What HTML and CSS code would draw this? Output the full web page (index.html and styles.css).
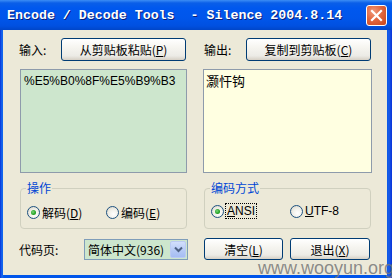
FILE: index.html
```html
<!DOCTYPE html>
<html lang="zh-CN">
<head>
    <meta charset="UTF-8">
    <title>Encode / Decode Tools - Silence 2004.8.14</title>
    <link rel="stylesheet" href="styles.css">
</head>
<body>
    <div class="window">
        <div class="titlebar">
            <span class="title">Encode / Decode Tools  - Silence 2004.8.14</span>
            <span class="close-btn">
                <svg width="13" height="13" viewBox="0 0 13 13">
                    <path d="M2 2 L11 11 M11 2 L2 11" stroke="#fff" stroke-width="2.2" stroke-linecap="square"/>
                </svg>
            </span>
        </div>

        <div class="client">
            <!-- left column -->
            <div class="col">
                <div class="row">
                    <span class="label">输入:</span>
                    <button class="btn btn-wide">从剪贴板粘贴(<u>P</u>)</button>
                </div>
                <div class="textbox textbox-in">%E5%B0%8F%E5%B9%B3</div>
                <fieldset class="group">
                    <legend>操作</legend>
                    <label class="radio checked"><span class="dot"></span><span>解码(<u>D</u>)</span></label>
                    <label class="radio"><span class="dot"></span><span>编码(<u>E</u>)</span></label>
                </fieldset>
                <div class="row row-bottom">
                    <span class="label label-page">代码页:</span>
                    <div class="select">
                        <span class="select-text">简体中文(936)</span>
                        <span class="select-arrow">
                            <svg width="9" height="7" viewBox="0 0 9 7">
                                <path d="M1 1.5 L4.5 5 L8 1.5" fill="none" stroke="#4D6185" stroke-width="2"/>
                            </svg>
                        </span>
                    </div>
                </div>
            </div>

            <!-- right column -->
            <div class="col">
                <div class="row">
                    <span class="label">输出:</span>
                    <button class="btn btn-wide">复制到剪贴板(<u>C</u>)</button>
                </div>
                <div class="textbox textbox-out">灏忓钩</div>
                <fieldset class="group group-right">
                    <legend>编码方式</legend>
                    <label class="radio checked"><span class="dot"></span><span class="focus"><u>A</u>NSI</span></label>
                    <label class="radio radio-utf"><span class="dot"></span><span><u>U</u>TF-8</span></label>
                </fieldset>
                <div class="row row-bottom">
                    <button class="btn btn-small">清空(<u>L</u>)</button>
                    <button class="btn btn-small btn-exit">退出(<u>X</u>)</button>
                </div>
            </div>
        </div>

        <div class="watermark">www.wooyun.org</div>
    </div>
</body>
</html>
```

FILE: styles.css
```css
/* Windows XP style dialog */
body {
    margin: 0;
    background: #0054e3;
    font-family: "Noto Sans CJK SC", "Liberation Sans", sans-serif;
    font-size: 12px;
    color: #000;
}

.window {
    position: relative;
    width: 392px;
    height: 278px;
    display: flex;
    flex-direction: column;
    overflow: hidden;
    background: linear-gradient(to right, #0831d9 0, #166aee 2px, #0055ea 4px, #0055ea 386px, #1a5ce6 389px, #0831d9 392px);
}

.titlebar {
    height: 30px;
    display: flex;
    align-items: center;
    justify-content: space-between;
    padding: 0 5px 0 7px;
    background: linear-gradient(#3c8df5 0, #0a5fe8 3px, #0058ee 8px, #0056eb 18px, #0050e0 26px, #0046c8 30px);
}

.title {
    font-family: "Liberation Mono", monospace;
    font-weight: bold;
    font-size: 13.3px;
    color: #fff;
    white-space: pre;
    text-shadow: 1px 1px 0 #0a1e78;
    padding-top: 1px;
}

.close-btn {
    width: 21px;
    height: 21px;
    box-sizing: border-box;
    border: 1px solid #fff;
    border-radius: 3px;
    background: radial-gradient(circle at 35% 30%, #f09a7c 0, #e2673f 45%, #c8441a 100%);
    display: flex;
    align-items: center;
    justify-content: center;
}

.client {
    flex: 1;
    margin: 0 5px 3px 3px;
    background: #ece9d8;
    padding: 8px 0 0 15px;
    display: grid;
    grid-template-columns: 170px 169px;
    column-gap: 15px;
}

.col {
    display: flex;
    flex-direction: column;
}

.row {
    display: flex;
    align-items: center;
    height: 23px;
}

.label {
    width: 42px;
    padding-left: 1px;
}

.btn {
    height: 23px;
    box-sizing: border-box;
    border: 1px solid #003c74;
    border-radius: 3px;
    background: linear-gradient(#ffffff 0, #f6f5f0 40%, #ecebe6 80%, #d6d0c5 100%);
    font-family: inherit;
    font-size: 12px;
    color: #000;
    padding: 0;
}

.btn-wide {
    width: 125px;
}

.textbox {
    margin-top: 8px;
    height: 104px;
    box-sizing: border-box;
    border: 1px solid #8e9bab;
    padding: 4px 3px;
    line-height: 14px;
}

.textbox-in {
    margin-left: 2px;
    width: 167px;
    background: #cde6cd;
    font-family: "Liberation Sans", sans-serif;
    font-size: 12px;
}

.textbox-out {
    width: 169px;
    background: #ffffe1;
    font-size: 13px;
    padding-left: 2px;
}

.group {
    margin: 8px 0 0 2px;
    width: 167px;
    height: 48px;
    box-sizing: border-box;
    border: 1px solid #d0d0bf;
    border-radius: 4px;
    padding: 9px 0 0 6px;
    display: flex;
    align-items: center;
}

.group-right {
    margin-left: 1px;
}

.group legend {
    color: #0046d5;
    padding: 0 1px;
    margin-left: -1px;
    line-height: 14px;
}

.radio {
    display: flex;
    align-items: center;
    gap: 2px;
    width: 79px;
}

.radio-utf {
    width: auto;
    margin-left: 0;
    font-family: "Liberation Sans", sans-serif;
}

.dot {
    width: 11px;
    height: 11px;
    border: 1px solid #1c5180;
    border-radius: 50%;
    background: radial-gradient(circle at 60% 65%, #ffffff 0, #f0efe8 50%, #d4d0c0 100%);
    display: flex;
    align-items: center;
    justify-content: center;
}

.checked .dot::after {
    content: "";
    width: 5px;
    height: 5px;
    border-radius: 50%;
    background: radial-gradient(circle at 40% 40%, #7ad67a 0, #21a121 60%, #1a8a1a 100%);
}

.focus {
    outline: 1px dotted #000;
    outline-offset: 0;
    padding: 0 1px;
    font-family: "Liberation Sans", sans-serif;
}

.row-bottom {
    margin-top: 9px;
    height: 22px;
}

.label-page {
    width: 65px;
}

.select {
    width: 104px;
    height: 21px;
    box-sizing: border-box;
    border: 1px solid #7f9db9;
    background: #cde6cd;
    display: flex;
    align-items: center;
    justify-content: space-between;
    padding: 1px 1px 1px 3px;
    font-size: 12px;
}

.select-text {
    white-space: nowrap;
}

.select-arrow {
    width: 16px;
    height: 17px;
    box-sizing: border-box;
    border: 1px solid #bbcaf3;
    border-radius: 2px;
    background: linear-gradient(#d2dffc, #b4c8f5 60%, #a6bdf4);
    display: flex;
    align-items: center;
    justify-content: center;
}

.btn-small {
    width: 79px;
    height: 22px;
    margin-left: 1px;
}

.btn-exit {
    width: 80px;
    margin-left: 7px;
}

.watermark {
    position: absolute;
    left: 258px;
    top: 258px;
    font-family: "Liberation Sans", sans-serif;
    font-size: 18px;
    color: rgba(120, 120, 120, 0.85);
    white-space: nowrap;
}
```
